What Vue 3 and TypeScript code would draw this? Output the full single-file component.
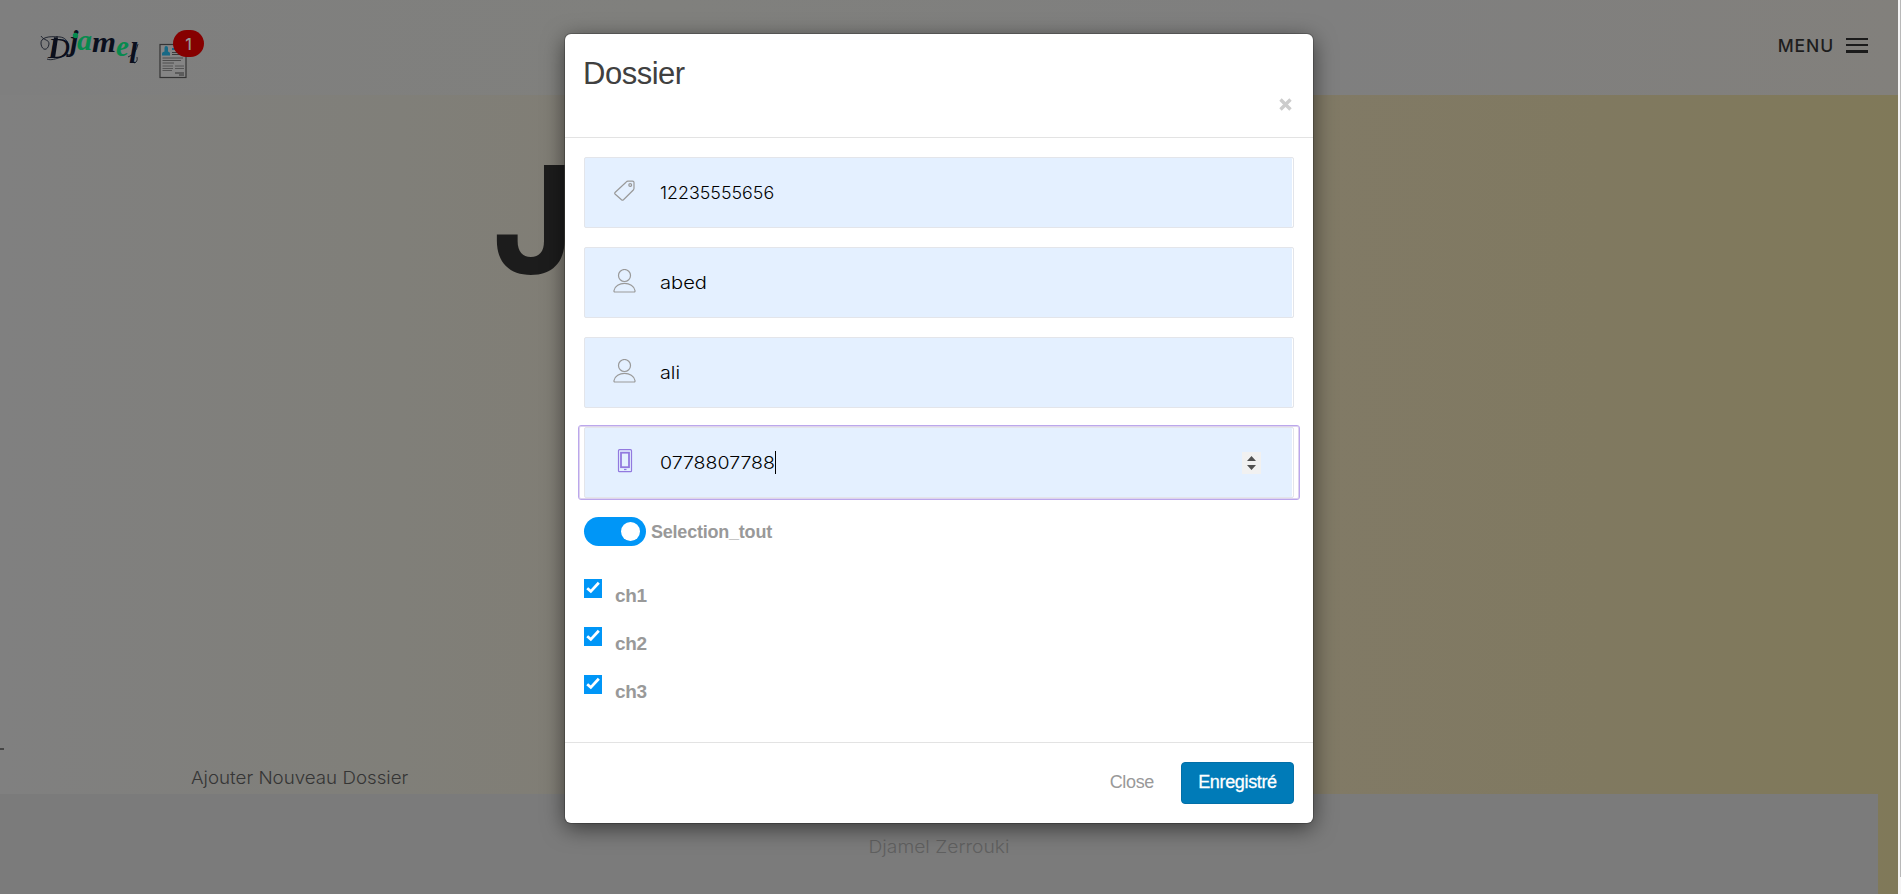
<script setup lang="ts">
import { ref } from 'vue'

interface Field {
  icon: 'tag' | 'user' | 'phone'
  value: string
  stretch: number
}

const fields: Field[] = [
  { icon: 'tag', value: '12235555656', stretch: 1.02 },
  { icon: 'user', value: 'abed', stretch: 1.15 },
  { icon: 'user', value: 'ali', stretch: 1.13 },
  { icon: 'phone', value: '0778807788', stretch: 1.115 },
]
const chapters = ref(['ch1', 'ch2', 'ch3'])
</script>

<template>
  <div class="page">
    <div class="content">
      <header class="topbar">
        <svg class="logo" width="104" height="40" viewBox="0 0 104 40">
          <g fill="none" stroke="#0a0f1d" stroke-width="0.8">
            <path d="M1 6C4 11 9 9 9 14C8 21 2 21 1 14C0 7 10 6 18 7" />
            <path d="M16 7C33 5 31 26 17 28.500C12 30 9 30 7 29" />
            <path d="M27 24C29 26 33 24 34 20" />
            <path d="M16 7.500L13 28" stroke-width="4" />
          </g>
          <g class="logo-text">
            <text class="thin" x="8" y="28" font-size="30">D</text>
            <text x="30" y="21" font-size="30">j</text>
            <text x="37" y="20" font-size="29" textLength="15" lengthAdjust="spacingAndGlyphs" class="green">a</text>
            <text x="52" y="22" font-size="29" textLength="24" lengthAdjust="spacingAndGlyphs">m</text>
            <text x="76" y="25.500" font-size="29" class="green">e</text>
            <text x="89" y="33" font-size="30">l</text>
            <circle class="green" cx="35.500" cy="5.500" r="2.700" />
          </g>
          <path d="M94 33Q98 32 97 27M88 27Q96 24 98 14" fill="none" stroke="#0a0f1d" stroke-width="0.8" />
        </svg>
        <div class="notif">
          <svg width="28" height="36" viewBox="0 0 28 36">
            <rect x="1" y="1.500" width="26" height="33" fill="#858585" stroke="#343434" stroke-width="1.200" />
            <path d="M3 12.500V10.500Q3 9 5.500 8.500V5Q5.500 3 7 3Q9 3 9 5V8.500Q11 9 11 10.500V12.500Z" fill="#176985" />
            <path d="M13 6H17" stroke="#176985" stroke-width="2" />
            <path d="M13 9.500H22M13 11.500H22" stroke="#3c3c3c" />
            <path d="M3.500 15H24M3.500 17.500H22M3.500 20H15" stroke="#4c4c4c" />
            <path d="M3.500 23H14M16 23H25M3.500 25.500H14M16 25.500H25M3.500 27.500H13" stroke="#555" />
            <path d="M16 30H25M20 32H25" stroke="#333" />
          </svg>
          <span class="badge">1</span>
        </div>
        <div class="menu">
          <span class="menu-label">MENU</span>
          <span class="bars"><i></i><i></i><i></i></span>
        </div>
      </header>
      <main class="hero">
        <div class="headline">J</div>
        <div class="dash"></div>
        <div class="add">Ajouter Nouveau Dossier</div>
      </main>
      <footer class="foot"><span>Djamel Zerrouki</span></footer>
    </div>
    <div class="scrollbar"><div class="thumb"></div></div>

    <div class="modal">
      <div class="modal-head">
        <h4>Dossier</h4>
        <svg class="close-x" width="13" height="13" viewBox="0 0 13 13">
          <path d="M1.500 1.500L11.500 11.500M11.500 1.500L1.500 11.500" stroke="#ccc" stroke-width="3.400" />
        </svg>
      </div>
      <div class="modal-body">
        <div v-for="(f, i) in fields" :key="i" class="field" :class="{ focused: f.icon === 'phone' }">
          <svg class="icon" width="24" height="24" viewBox="0 0 24 24" fill="none" stroke="currentColor" stroke-width="1.200">
            <g v-if="f.icon === 'tag'">
              <path d="M2 13.500L13 3.200Q14 2.200 15 2.200H19.500Q21 2.200 21 3.500V9.300Q21 10.200 20.300 11L10.500 20.700Q9.500 21.500 8.500 20.700L2 15Q1.300 14.300 2 13.500Z" />
              <circle cx="17.200" cy="6" r="1.400" />
            </g>
            <g v-else-if="f.icon === 'user'">
              <circle cx="11.500" cy="6.500" r="6" />
              <path d="M1.800 23Q0.800 23 1 21.500C2.500 12 20.500 12 22 21.500Q22.200 23 21.200 23Z" />
            </g>
            <g v-else>
              <rect x="5.500" y="0.700" width="13" height="22" rx="1" />
              <rect x="8" y="3.700" width="8" height="14.500" stroke-width="1.800" />
              <path d="M11 20.500H13.500" />
            </g>
          </svg>
          <span class="value" :style="{ transform: `scaleX(${f.stretch})` }">{{ f.value }}</span>
          <span v-if="f.icon === 'phone'" class="caret"></span>
          <svg v-if="f.icon === 'phone'" class="spinner" width="19" height="22" viewBox="0 0 19 22">
            <rect width="19" height="22" fill="#f1f1f1" />
            <path d="M5 9L9.500 4L14 9ZM5 13H14L9.500 18Z" fill="#505050" />
          </svg>
        </div>
        <div class="toggle-row">
          <span class="toggle"><span class="knob"></span></span>
          <span class="toggle-label">Selection_tout</span>
        </div>
        <div class="checks">
          <div v-for="c in chapters" :key="c" class="check-row">
            <svg width="18" height="19" viewBox="0 0 18 19">
              <rect width="18" height="19" fill="#0096f7" />
              <path d="M3.200 9.300L6.800 12.400L14.800 3.800" fill="none" stroke="#fff" stroke-width="2.800" />
            </svg>
            <span>{{ c }}</span>
          </div>
        </div>
      </div>
      <div class="modal-foot">
        <span class="close-btn">Close</span>
        <button class="save">Enregistré</button>
      </div>
    </div>
  </div>
</template>

<style>
body {
  margin: 0;
  overflow: hidden;
}
</style>

<style scoped>
.page {
  position: relative;
  display: flex;
  width: 1901px;
  height: 894px;
  overflow: hidden;
  font-family: Inter, "Liberation Sans", sans-serif;
}
.content {
  width: 1898px;
  display: flex;
  flex-direction: column;
  background: linear-gradient(90deg, #808080 0, #807f79 400px, #817b6d 900px, #817a66 1320px, #807960 1600px, #807959 1898px);
}
.scrollbar {
  width: 3px;
  background: #f5f4f5;
  display: flex;
  justify-content: flex-end;
}
.thumb {
  width: 1px;
  height: 877px;
  background: #b8b8b8;
}
.topbar {
  height: 95px;
  box-sizing: border-box;
  display: flex;
  padding: 0 30px 0 40px;
  background: linear-gradient(90deg, #7f7f7f, #80807d 35%, #7f7f7f 70%, #82807c);
}
.logo {
  margin-top: 30px;
  overflow: visible;
}
.logo-text {
  font-family: "Liberation Serif", serif;
  font-style: italic;
  font-weight: 700;
  fill: #0a0f1d;
}
.thin {
  font-weight: 400;
}
.green {
  fill: #078a4e;
}
.notif {
  position: relative;
  margin: 43px 0 0 15px;
}
.badge {
  position: absolute;
  left: 14px;
  top: -13px;
  width: 31px;
  height: 27px;
  border-radius: 14px;
  background: #860000;
  color: #959595;
  font-size: 16px;
  font-weight: 500;
  line-height: 28px;
  text-align: center;
}
.menu {
  margin: 34px 0 0 auto;
  height: 22px;
  display: flex;
  align-items: center;
}
.menu-label {
  color: #1d1d1d;
  font-size: 17.500px;
  font-weight: 450;
  letter-spacing: 0.900px;
  line-height: 22px;
  margin: 1px 12px 0 0;
}
.bars {
  width: 22px;
  height: 15px;
  display: flex;
  flex-direction: column;
  justify-content: space-between;
}
.bars i {
  height: 2px;
  background: #1b1b1b;
}
.bars i:last-child {
  height: 3px;
}
.hero {
  height: 699px;
  display: flex;
  flex-direction: column;
  color: #353535;
}
.headline {
  margin: 35px 0 0 492px;
  width: 100px;
  height: 180px;
  line-height: 180px;
  font-size: 150px;
  font-weight: 700;
  color: #1c1c1c;
  transform: scaleX(0.930);
  transform-origin: 4px 0;
}
.dash {
  margin-top: 438px;
  width: 4px;
  height: 2px;
  background: #454545;
}
.add {
  margin: 16px 0 0 191px;
  width: 210px;
  white-space: nowrap;
  font-size: 17.500px;
  font-weight: 300;
  line-height: 24px;
  transform: scaleX(1.070);
  transform-origin: 0 0;
}
.foot {
  flex: 1;
  width: 1878px;
  background: #7b7b7b;
  text-align: center;
  color: #606060;
  font-size: 17.500px;
  font-weight: 300;
  line-height: 24px;
}
.foot span {
  display: block;
  margin-top: 41px;
  transform: scaleX(1.100);
}
.modal {
  position: absolute;
  left: 565px;
  top: 34px;
  width: 748px;
  height: 789px;
  border-radius: 6px;
  background: #fff;
  box-shadow: 0 0 0 1px rgba(0, 0, 0, 0.200), 0 5px 22px rgba(0, 0, 0, 0.550);
  display: flex;
  flex-direction: column;
  font-family: "Liberation Sans", Arial, sans-serif;
}
.modal-head {
  height: 103px;
  padding: 0 21px 0 18px;
  border-bottom: 1px solid #e3e3e3;
  display: flex;
  flex-direction: column;
}
.modal-head h4 {
  margin: 22px 0 0;
  font-size: 31px;
  font-weight: 400;
  line-height: 36px;
  letter-spacing: -0.500px;
  color: #404040;
}
.close-x {
  margin: 6px 0 0;
  align-self: flex-end;
}
.modal-body {
  flex: 1;
  padding: 19px 19px 0;
}
.field {
  height: 71px;
  box-sizing: border-box;
  margin-bottom: 19px;
  border: 1px solid #e3e5ea;
  border-radius: 2px;
  background: #e4f0ff;
  box-shadow: inset -1px 0 #fff;
  display: flex;
  align-items: center;
  color: #000;
  font-family: Inter, sans-serif;
}
.icon {
  margin-left: 28px;
  color: #999;
  margin-top: -4px;
}
.value {
  margin-left: 23px;
  font-size: 17.500px;
  font-weight: 300;
  transform-origin: 0 50%;
}
.focused {
  position: relative;
}
.focused::before {
  content: "";
  position: absolute;
  inset: -3px -7px;
  border: 1px solid #bba7ec;
  border-radius: 3px;
  box-shadow: inset 0 0 0 1px #ded4ee;
}
.focused .icon {
  color: #9279df;
}
.caret {
  width: 1px;
  height: 23px;
  margin-left: 12px;
  background: #000;
}
.spinner {
  margin: 0 32px 0 auto;
}
.toggle-row {
  display: flex;
  align-items: center;
  height: 29px;
}
.toggle {
  width: 62px;
  height: 29px;
  box-sizing: border-box;
  padding: 5px 6px;
  border-radius: 15px;
  background: #0096f7;
  display: flex;
  justify-content: flex-end;
}
.knob {
  width: 19px;
  height: 19px;
  border-radius: 50%;
  background: #fff;
}
.toggle-label {
  margin: 2px 0 0 5px;
  font-size: 18px;
  font-weight: 700;
  color: #999;
  letter-spacing: -0.220px;
}
.checks {
  margin-top: 33px;
}
.check-row {
  height: 48px;
  display: flex;
}
.check-row span {
  margin: 5px 0 0 13px;
  font-size: 19px;
  font-weight: 700;
  line-height: 24px;
  color: #999;
  letter-spacing: -0.300px;
}
.modal-foot {
  height: 80px;
  border-top: 1px solid #e3e3e3;
  padding: 0 19px;
  display: flex;
  justify-content: flex-end;
  align-items: center;
  font-size: 18px;
  letter-spacing: -0.350px;
}
.close-btn {
  color: #999;
  margin: 0 27px 2px 0;
}
.save {
  width: 113px;
  height: 42px;
  padding: 0 0 2px;
  border: 1px solid #026fa8;
  border-radius: 4px;
  background: #007bb8;
  color: #fff;
  font: inherit;
  letter-spacing: inherit;
  -webkit-text-stroke: 0.300px #fff;
}
</style>
